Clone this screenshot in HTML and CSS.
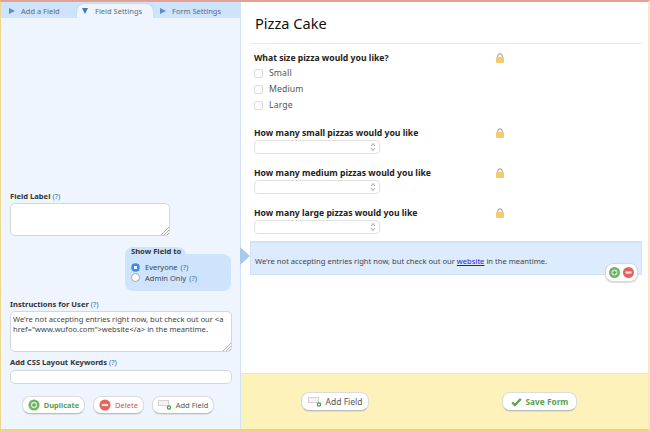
FILE: index.html
```html
<!DOCTYPE html>
<html lang="en">
<head>
<meta charset="utf-8">
<title>Pizza Cake</title>
<link rel="stylesheet" href="styles.css">
</head>
<body>
<div class="frame">
  <aside class="side">
    <nav class="tabs">
      <span class="tab"><i class="tri tri-r"></i>Add a Field</span>
      <span class="tab tab-on"><i class="tri tri-d"></i>Field Settings</span>
      <span class="tab tab-form"><i class="tri tri-r"></i>Form Settings</span>
    </nav>
    <div class="panel">
      <label class="lab lab-first">Field Label <a class="q">(?)</a></label>
      <div class="area area-label"><svg class="grip" width="9" height="9" viewBox="0 0 9 9"><path d="M1 9L9 1M4 9L9 4M7 9L9 7" stroke="#999" stroke-width=".8"/></svg></div>
      <div class="show-wrap">
        <div class="show">
          <div class="show-head">Show Field to</div>
          <div class="radio"><i class="dot dot-on"></i>Everyone <span class="q">(?)</span></div>
          <div class="radio"><i class="dot"></i>Admin Only <span class="q">(?)</span></div>
        </div>
      </div>
      <label class="lab lab-ins">Instructions for User <a class="q">(?)</a></label>
      <div class="area area-ins">We're not accepting entries right now, but check out our &lt;a href="www.wufoo.com"&gt;website&lt;/a&gt; in the meantime.<svg class="grip" width="9" height="9" viewBox="0 0 9 9"><path d="M1 9L9 1M4 9L9 4M7 9L9 7" stroke="#999" stroke-width=".8"/></svg></div>
      <label class="lab lab-css">Add CSS Layout Keywords <a class="q">(?)</a></label>
      <div class="area area-css"></div>
      <div class="side-btns">
        <span class="btn btn-dup"><svg width="12" height="12" viewBox="0 0 13 13"><circle cx="6.5" cy="6.5" r="6" fill="#6db561"/><circle cx="6.5" cy="6.5" r="3.4" fill="#cfe8c8"/><path d="M6.5 4.5v4M4.5 6.5h4" stroke="#5fa855" stroke-width="1.4"/></svg>Duplicate</span>
        <span class="btn btn-del"><svg width="12" height="12" viewBox="0 0 13 13"><circle cx="6.5" cy="6.5" r="6" fill="#e8625c"/><rect x="3" y="5.3" width="7" height="2.4" fill="#fbe3e0"/></svg>Delete</span>
        <span class="btn btn-add"><svg width="14" height="10" viewBox="0 0 14 10"><rect x=".5" y=".5" width="10" height="5" fill="#f4f4f4" stroke="#d4d4d4"/><circle cx="11" cy="7.500" r="1.600" fill="#fff" stroke="#4f9a45" stroke-width="1.300"/></svg>Add Field</span>
      </div>
    </div>
  </aside>
  <i class="pointer"></i>
  <main class="main">
    <div class="form">
      <h1 class="title">Pizza Cake</h1>
      <section class="field field-check">
        <div class="q-row"><span class="q-text">What size pizza would you like?</span><svg class="lock" width="8" height="10" viewBox="0 0 9 11"><path d="M2 5V3.2a2.5 2.5 0 0 1 5 0V5" fill="none" stroke="#a8a08a" stroke-width="1.2"/><rect y="4.5" width="9" height="6.5" rx="1" fill="#f0cb72"/></svg></div>
        <div class="check"><i class="box"></i>Small</div>
        <div class="check"><i class="box"></i>Medium</div>
        <div class="check"><i class="box"></i>Large</div>
      </section>
      <section class="field">
        <div class="q-row"><span class="q-text">How many small pizzas would you like</span><svg class="lock" width="8" height="10" viewBox="0 0 9 11"><path d="M2 5V3.2a2.5 2.5 0 0 1 5 0V5" fill="none" stroke="#a8a08a" stroke-width="1.2"/><rect y="4.5" width="9" height="6.5" rx="1" fill="#f0cb72"/></svg></div>
        <div class="sel"><svg width="6" height="10" viewBox="0 0 6 10"><path d="M1 4l2-2.500 2 2.500M1 6l2 2.500 2-2.500" fill="none" stroke="#888" stroke-width=".8"/></svg></div>
      </section>
      <section class="field">
        <div class="q-row"><span class="q-text">How many medium pizzas would you like</span><svg class="lock" width="8" height="10" viewBox="0 0 9 11"><path d="M2 5V3.2a2.5 2.5 0 0 1 5 0V5" fill="none" stroke="#a8a08a" stroke-width="1.2"/><rect y="4.5" width="9" height="6.5" rx="1" fill="#f0cb72"/></svg></div>
        <div class="sel"><svg width="6" height="10" viewBox="0 0 6 10"><path d="M1 4l2-2.500 2 2.500M1 6l2 2.500 2-2.500" fill="none" stroke="#888" stroke-width=".8"/></svg></div>
      </section>
      <section class="field">
        <div class="q-row"><span class="q-text">How many large pizzas would you like</span><svg class="lock" width="8" height="10" viewBox="0 0 9 11"><path d="M2 5V3.2a2.5 2.5 0 0 1 5 0V5" fill="none" stroke="#a8a08a" stroke-width="1.2"/><rect y="4.5" width="9" height="6.5" rx="1" fill="#f0cb72"/></svg></div>
        <div class="sel"><svg width="6" height="10" viewBox="0 0 6 10"><path d="M1 4l2-2.500 2 2.500M1 6l2 2.500 2-2.500" fill="none" stroke="#888" stroke-width=".8"/></svg></div>
      </section>
      <section class="notice">We're not accepting entries right now, but check out our <a class="link">website</a> in the meantime.
        <div class="pm">
          <svg width="13" height="13" viewBox="0 0 13 13"><circle cx="6.5" cy="6.5" r="5.500" fill="#6db561"/><circle cx="6.5" cy="6.500" r="3" fill="#cfe8c8"/><path d="M6.500 4.700v3.600M4.700 6.500h3.600" stroke="#5fa855" stroke-width="1.300"/></svg>
          <svg width="13" height="13" viewBox="0 0 13 13"><circle cx="6.500" cy="6.500" r="5.500" fill="#e8625c"/><rect x="3.500" y="5.400" width="6" height="2.200" fill="#fbe3e0"/></svg>
        </div>
      </section>
    </div>
    <footer class="foot">
      <span class="btn btn-add btn-foot"><svg width="14" height="10" viewBox="0 0 14 10"><rect x=".5" y=".5" width="10" height="5" fill="#f4f4f4" stroke="#d4d4d4"/><circle cx="11" cy="7.500" r="1.600" fill="#fff" stroke="#4f9a45" stroke-width="1.300"/></svg>Add Field</span>
      <span class="btn btn-save btn-foot"><svg width="11" height="10" viewBox="0 0 14 12"><path d="M1.500 6.500L5 10l7.500-8" fill="none" stroke="#5fa855" stroke-width="3"/></svg>Save Form</span>
    </footer>
  </main>
</div>
</body>
</html>
```
FILE: styles.css
```css
* { box-sizing: border-box; }
html, body { margin: 0; padding: 0; height: 100%; }
body { font-family: "Noto Sans", "DejaVu Sans", sans-serif; background: #fff; color: #444; overflow: hidden; }
i { display: block; font-style: normal; }
svg { flex: none; }

.frame {
  position: relative; display: flex; width: 650px; height: 431px;
  border-top: 2px solid #e2a193; border-left: 1px solid #eed68c;
  border-bottom: 2px solid #eed27c; border-right: 2px solid #fbe9b9;
}

.side { width: 240px; display: flex; flex-direction: column; background: #eef5ff; border-right: 1px solid #cfe2f8; }
.tabs { height: 16px; background: #cde4fc; display: flex; align-items: flex-end; position: relative; }
.tab { font-size: 7.500px; color: #5a6b7c; display: flex; align-items: center; gap: 6px; height: 14px; padding-left: 8px; width: 75px; white-space: nowrap; }
.tab-on { width: 78px; height: 15px; padding-left: 5px; gap: 7px; background: #eef5ff; border: 1px solid #c4dcf8; border-bottom: 0; border-radius: 8px 8px 0 0; }
.tab-form { padding-left: 6px; }
.tri { width: 0; height: 0; }
.tri-r { border-left: 6px solid #5f8cc4; border-top: 3.500px solid transparent; border-bottom: 3.500px solid transparent; }
.tri-d { border-top: 6px solid #4678b8; border-left: 3.500px solid transparent; border-right: 3.500px solid transparent; }

.panel { flex: 1; display: flex; flex-direction: column; padding: 0 8px 0 9px; }
.lab { display: block; font-size: 7.600px; font-weight: bold; color: #333; line-height: 11px; white-space: nowrap; }
.lab-first { margin-top: 173px; }
.lab-ins { margin-top: 8px; }
.lab-css { margin-top: 5px; }
.q { color: #3f6fa8; font-weight: normal; }
.area { position: relative; background: #fff; border: 1px solid #d6d6d6; border-radius: 5px; font-size: 7.600px; color: #444; line-height: 9.500px; padding: 3px 2px; }
.area-label { width: 160px; height: 33px; margin-top: 1px; }
.area-ins { width: 222px; height: 41px; margin-top: 1px; }
.area-css { width: 222px; height: 14px; margin-top: 2px; padding: 0; }
.grip { position: absolute; right: 0; bottom: 0; }

.show-wrap { display: flex; justify-content: flex-end; padding-right: 1px; margin-top: 18px; }
.show { position: relative; width: 106px; height: 37px; background: #cde4fc; border-radius: 8px; padding: 0 0 0 6px; font-size: 7.500px; }
.show::before { content: ""; position: absolute; left: 0; top: -7px; width: 61px; height: 14px; background: #cde4fc; border-radius: 8px 8px 0 0; }
.show-head { position: relative; font-weight: bold; color: #333; font-size: 7.600px; line-height: 11px; margin-top: -7px; margin-bottom: 4px; top: -1px; }
.radio { display: flex; align-items: center; gap: 3px; height: 10.500px; color: #445; white-space: nowrap; }
.dot { width: 9px; height: 9px; margin-right: 2px; border-radius: 50%; background: #fff; border: 1px solid #aaa; }
.dot-on { background: radial-gradient(circle, #fff 0 1.500px, #3c8cf0 2px); border-color: #3c8cf0; }

.side-btns { display: flex; gap: 8px; margin-top: 12px; padding-left: 12px; }
.btn { display: inline-flex; align-items: center; justify-content: center; gap: 4px; height: 18px; padding: 0; background: #fff; border-radius: 8px; font-size: 7.500px; white-space: nowrap; border: 1px solid #dcdcdc; border-bottom-color: #bcbcbc; box-shadow: 0 1px 1px rgba(0,0,0,.08); }
.btn-dup { width: 63px; color: #5d9f50; font-weight: bold; }
.btn-del { width: 51px; color: #d8504a; }
.btn-add { width: 62px; color: #555; }
.btn-save { color: #5d9f50; font-weight: bold; }

.pointer { position: absolute; left: 239px; top: 245px; z-index: 2; width: 0; height: 0; border-left: 10px solid #a9c8ec; border-top: 9px solid transparent; border-bottom: 9px solid transparent; }

.main { flex: 1; display: flex; flex-direction: column; min-width: 0; }
.form { flex: 1; padding: 0 6px 0 9px; }
.title { margin: 0; box-sizing: content-box; height: 18px; padding: 12px 0 11px 5px; font-size: 14.600px; line-height: 18px; font-weight: normal; color: #111; border-bottom: 1px solid #e8e8e8; }
.field { padding-left: 4px; margin-top: 12px; }
.field-check { margin-top: 7px; }
.field-check + .field { margin-top: 13px; }
.q-row { display: flex; height: 13px; align-items: center; width: 250px; justify-content: space-between; }
.field-check .q-row { margin-bottom: 1px; }
.q-text { font-size: 8.660px; font-weight: bold; color: #222; white-space: nowrap; }
.check { display: flex; align-items: center; gap: 6px; height: 16px; font-size: 8.700px; color: #555; letter-spacing: .1px; }
.box { width: 9px; height: 9px; border: 1px solid #ddd; border-radius: 2px; background: #fcfcfc; }
.sel { display: flex; align-items: center; justify-content: flex-end; width: 126px; height: 14px; margin-top: 1px; padding-right: 3px; background: #fff; border: 1px solid #e0e0e0; border-radius: 4px; }
.notice { position: relative; margin-top: 7px; height: 34px; background: #dcebfd; border: 1px solid #cfe2f8; box-shadow: inset 0 5px 0 -4px #cfe2f8; font-size: 7.600px; color: #444; padding: 14px 0 0 4px; white-space: nowrap; }
.link { color: #1a1ae6; text-decoration: underline; }
.pm { position: absolute; right: 3px; top: 21px; width: 33px; height: 19px; display: flex; align-items: center; justify-content: center; gap: 1px; background: #fff; border: 1px solid #d8d8d8; border-radius: 8px; box-shadow: 0 1px 1px rgba(0,0,0,.15); }

.foot { height: 56px; display: flex; align-items: center; background: #fdf2b9; border-top: 1px solid #f7e6a5; padding: 0 0 0 60px; gap: 133px; }
.btn-foot { height: 19px; font-size: 8.500px; }
.foot .btn-add { width: 68px; }
.foot .btn-save { width: 75px; font-size: 8.300px; }
```
